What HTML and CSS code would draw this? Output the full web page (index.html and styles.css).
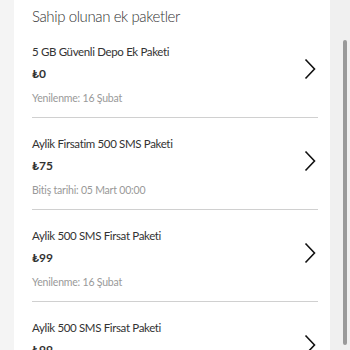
FILE: index.html
```html
<!DOCTYPE html>
<html lang="tr">
<head>
<meta charset="utf-8">
<link rel="stylesheet" href="styles.css">
</head>
<body>
<div class="page">
  <div class="gutter"></div>
  <main class="card">
    <h1 class="heading">Sahip olunan ek paketler</h1>
    <ul class="list">
      <li class="item">
        <div class="info">
          <div class="title">5 GB Güvenli Depo Ek Paketi</div>
          <div class="price">₺0</div>
          <div class="sub">Yenilenme: 16 Şubat</div>
        </div>
        <svg class="chev" width="12" height="22" viewBox="0 0 12 22"><path d="M1.5 1.5 L10.5 11 L1.5 20.5" fill="none" stroke="#111" stroke-width="1.6"/></svg>
      </li>
      <li class="item">
        <div class="info">
          <div class="title">Aylik Firsatim 500 SMS Paketi</div>
          <div class="price">₺75</div>
          <div class="sub">Bitiş tarihi: 05 Mart 00:00</div>
        </div>
        <svg class="chev" width="12" height="22" viewBox="0 0 12 22"><path d="M1.5 1.5 L10.5 11 L1.5 20.5" fill="none" stroke="#111" stroke-width="1.6"/></svg>
      </li>
      <li class="item">
        <div class="info">
          <div class="title">Aylik 500 SMS Firsat Paketi</div>
          <div class="price">₺99</div>
          <div class="sub">Yenilenme: 16 Şubat</div>
        </div>
        <svg class="chev" width="12" height="22" viewBox="0 0 12 22"><path d="M1.5 1.5 L10.5 11 L1.5 20.5" fill="none" stroke="#111" stroke-width="1.6"/></svg>
      </li>
      <li class="item">
        <div class="info">
          <div class="title">Aylik 500 SMS Firsat Paketi</div>
          <div class="price">₺99</div>
          <div class="sub">Yenilenme: 16 Şubat</div>
        </div>
        <svg class="chev" width="12" height="22" viewBox="0 0 12 22"><path d="M1.5 1.5 L10.5 11 L1.5 20.5" fill="none" stroke="#111" stroke-width="1.6"/></svg>
      </li>
    </ul>
  </main>
  <div class="scroll"><div class="thumb"></div></div>
</div>
</body>
</html>
```
FILE: styles.css
```css
* { box-sizing: border-box; }
html, body { margin: 0; padding: 0; height: 100%; overflow: hidden; }
body { background: #f4f4f4; font-family: Lato, "Open Sans", sans-serif; color: #333; }
.page { display: flex; height: 350px; }
.gutter { width: 14px; flex: none; }
.card { flex: 1; background: #fff; padding: 6px 12px 0 18px; overflow: hidden; }
.heading { margin: 0; font-size: 15px; line-height: 20px; font-weight: 300; color: #333; letter-spacing: -0.4px; }
.list { list-style: none; margin: 0; padding: 0; }
.item { display: flex; align-items: center; border-bottom: 1px solid #d0d0d0; padding: 18px 0 11px 0; }
.info { flex: 1; }
.title { font-size: 11.5px; line-height: 16px; color: #333; font-weight: 400; letter-spacing: -0.35px; }
.price { font-size: 12px; line-height: 16px; margin-top: 6px; color: #333; font-weight: 700; }
.sub { font-size: 10.5px; line-height: 16px; margin-top: 8px; color: #999; letter-spacing: -0.2px; }
.chev { flex: none; margin-right: 2px; margin-bottom: 12px; }
.scroll { width: 20px; flex: none; background: #f0f0f0; padding: 40px 3px 5px 13px; }
.thumb { width: 4px; height: 100%; background: #9a9a9a; border-radius: 2px; }
```
